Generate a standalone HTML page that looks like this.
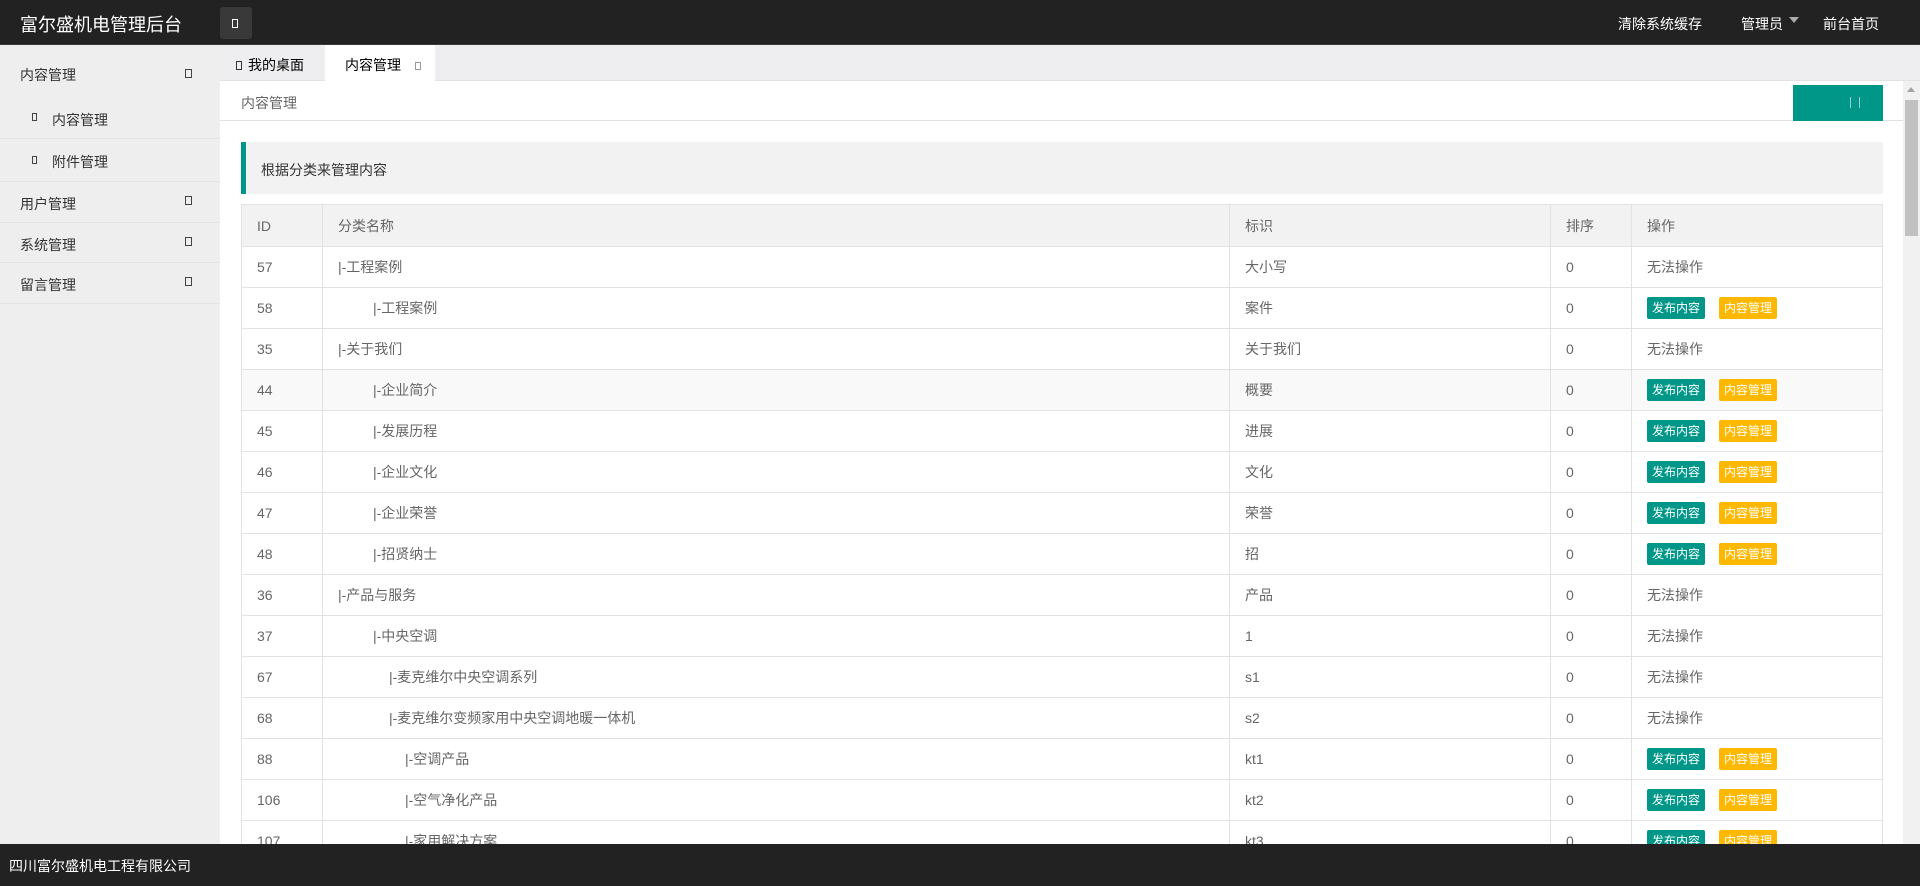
<!DOCTYPE html>
<html><head><meta charset="utf-8"><style>
*{margin:0;padding:0;box-sizing:border-box}
body{width:1920px;height:886px;overflow:hidden;font-family:"Liberation Sans","Noto Sans CJK SC",sans-serif;background:#fff;position:relative;font-size:14px;color:#666}
.hd{position:absolute;left:0;top:0;width:1920px;height:45px;background:#222;border-bottom:1px solid #3a3a3a}
.hd .t{position:absolute;left:20px;top:11px;color:#fff;font-size:18px}
.hd .tg{position:absolute;left:220px;top:7px;width:32px;height:32px;background:#393939;border-radius:3px}
.hd .tg i{position:absolute;left:12px;top:12px;width:6px;height:9px;border:1px solid #fff}
.hd .r{position:absolute;top:14px;color:#fff;font-size:14px}
.sd{position:absolute;left:0;top:45px;width:220px;height:799px;background:#eee}
.sd .it{position:absolute;left:0;width:220px;border-bottom:1px solid #e2e2e2;color:#333;font-size:14px}
.sd .it span{position:absolute;left:20px}
.sd .ic{position:absolute;width:7px;height:9px;border:1px solid #444}
.tabs{position:absolute;left:220px;top:45px;width:1700px;height:36px;background:#eeeef0;border-bottom:1px solid #e2e2e2}
.tab{position:absolute;top:0;height:36px;font-size:14px;color:#000;padding-top:10px}
.bc{position:absolute;left:220px;top:81px;width:1683px;height:40px;border-bottom:1px solid #e2e2e2;background:#fff}
.gb{position:absolute;left:1793px;top:85px;width:90px;height:36px;background:#009688}
.sb{position:absolute;left:1903px;top:81px;width:17px;height:763px;background:#f1f1f1}
.bq{position:absolute;left:241px;top:142px;width:1642px;height:52px;background:#f2f2f2;border-left:5px solid #009688;color:#333;font-size:14px;padding:18px 0 0 15px}
table{position:absolute;left:241px;top:204px;width:1642px;border-collapse:collapse;font-size:14px;color:#666}
td,th{border:1px solid #e2e2e2;height:41px;padding:0 15px;text-align:left;font-weight:normal}
th{background:#f2f2f2;height:42px}
.b{display:inline-block;height:22px;line-height:22px;padding:0 5px;color:#fff;font-size:12px;border-radius:2px;margin-right:14px}
.g{background:#009688}.y{background:#ffb800}
.ft{position:absolute;left:0;top:844px;width:1920px;height:42px;background:#222;color:#fff;font-size:14px;padding:12px 0 0 9px}
</style></head><body>
<div class="hd"><div class="t">富尔盛机电管理后台</div><div class="tg"><i></i></div>
<div class="r" style="left:1618px">清除系统缓存</div><div class="r" style="left:1741px">管理员</div>
<div style="position:absolute;left:1789px;top:17px;border:5px solid transparent;border-top:6px solid #aaa"></div>
<div class="r" style="left:1823px">前台首页</div></div>
<div class="sd">
<div class="it" style="top:0;height:52px;border:none"><span style="top:20px">内容管理</span><i class="ic" style="left:185px;top:24px"></i></div>
<div class="it" style="top:52px;height:42px"><i class="ic" style="left:32px;top:16px;width:5px;height:8px"></i><span style="left:52px;top:13px">内容管理</span></div>
<div class="it" style="top:94px;height:43px"><i class="ic" style="left:32px;top:17px;width:5px;height:8px"></i><span style="left:52px;top:13px">附件管理</span></div>
<div class="it" style="top:137px;height:41px"><span style="top:12px">用户管理</span><i class="ic" style="left:185px;top:14px"></i></div>
<div class="it" style="top:178px;height:40px"><span style="top:12px">系统管理</span><i class="ic" style="left:185px;top:14px"></i></div>
<div class="it" style="top:218px;height:41px"><span style="top:12px">留言管理</span><i class="ic" style="left:185px;top:14px"></i></div>
</div>
<div class="tabs">
<div class="tab" style="left:0;width:105px;padding-left:16px"><i style="display:inline-block;width:6px;height:9px;border:1px solid #333;margin-right:6px"></i>我的桌面</div>
<div class="tab" style="left:105px;width:110px;background:#fff;padding-left:20px;height:37px">内容管理<i style="display:inline-block;width:6px;height:8px;border:1px solid #999;margin-left:14px"></i></div>
</div>
<div class="bc"><span style="position:absolute;left:21px;top:12px;color:#666">内容管理</span></div>
<div class="gb"><i style="position:absolute;left:57px;top:12px;width:1px;height:11px;background:#9cd"></i><i style="position:absolute;left:66px;top:12px;width:1px;height:11px;background:#9cd"></i></div>
<div class="sb"><div style="position:absolute;left:4px;top:6px;border:4px solid transparent;border-bottom:5px solid #a3a3a3;border-top:0"></div><div style="position:absolute;left:2px;top:19px;width:13px;height:136px;background:#c1c1c1"></div></div>
<div class="bq">根据分类来管理内容</div>
<table>
<tr><th style="width:81px">ID</th><th style="width:907px">分类名称</th><th style="width:321px">标识</th><th style="width:81px">排序</th><th>操作</th></tr>
<tr><td>57</td><td>|-工程案例</td><td>大小写</td><td>0</td><td>无法操作</td></tr>
<tr><td>58</td><td style="padding-left:50px">|-工程案例</td><td>案件</td><td>0</td><td><span class="b g">发布内容</span><span class="b y">内容管理</span></td></tr>
<tr><td>35</td><td>|-关于我们</td><td>关于我们</td><td>0</td><td>无法操作</td></tr>
<tr style="background:#f9f9f9"><td>44</td><td style="padding-left:50px">|-企业简介</td><td>概要</td><td>0</td><td><span class="b g">发布内容</span><span class="b y">内容管理</span></td></tr>
<tr><td>45</td><td style="padding-left:50px">|-发展历程</td><td>进展</td><td>0</td><td><span class="b g">发布内容</span><span class="b y">内容管理</span></td></tr>
<tr><td>46</td><td style="padding-left:50px">|-企业文化</td><td>文化</td><td>0</td><td><span class="b g">发布内容</span><span class="b y">内容管理</span></td></tr>
<tr><td>47</td><td style="padding-left:50px">|-企业荣誉</td><td>荣誉</td><td>0</td><td><span class="b g">发布内容</span><span class="b y">内容管理</span></td></tr>
<tr><td>48</td><td style="padding-left:50px">|-招贤纳士</td><td>招</td><td>0</td><td><span class="b g">发布内容</span><span class="b y">内容管理</span></td></tr>
<tr><td>36</td><td>|-产品与服务</td><td>产品</td><td>0</td><td>无法操作</td></tr>
<tr><td>37</td><td style="padding-left:50px">|-中央空调</td><td>1</td><td>0</td><td>无法操作</td></tr>
<tr><td>67</td><td style="padding-left:66px">|-麦克维尔中央空调系列</td><td>s1</td><td>0</td><td>无法操作</td></tr>
<tr><td>68</td><td style="padding-left:66px">|-麦克维尔变频家用中央空调地暖一体机</td><td>s2</td><td>0</td><td>无法操作</td></tr>
<tr><td>88</td><td style="padding-left:82px">|-空调产品</td><td>kt1</td><td>0</td><td><span class="b g">发布内容</span><span class="b y">内容管理</span></td></tr>
<tr><td>106</td><td style="padding-left:82px">|-空气净化产品</td><td>kt2</td><td>0</td><td><span class="b g">发布内容</span><span class="b y">内容管理</span></td></tr>
<tr><td>107</td><td style="padding-left:82px">|-家用解决方案</td><td>kt3</td><td>0</td><td><span class="b g">发布内容</span><span class="b y">内容管理</span></td></tr>
</table>
<div class="ft">四川富尔盛机电工程有限公司</div>
</body></html>
